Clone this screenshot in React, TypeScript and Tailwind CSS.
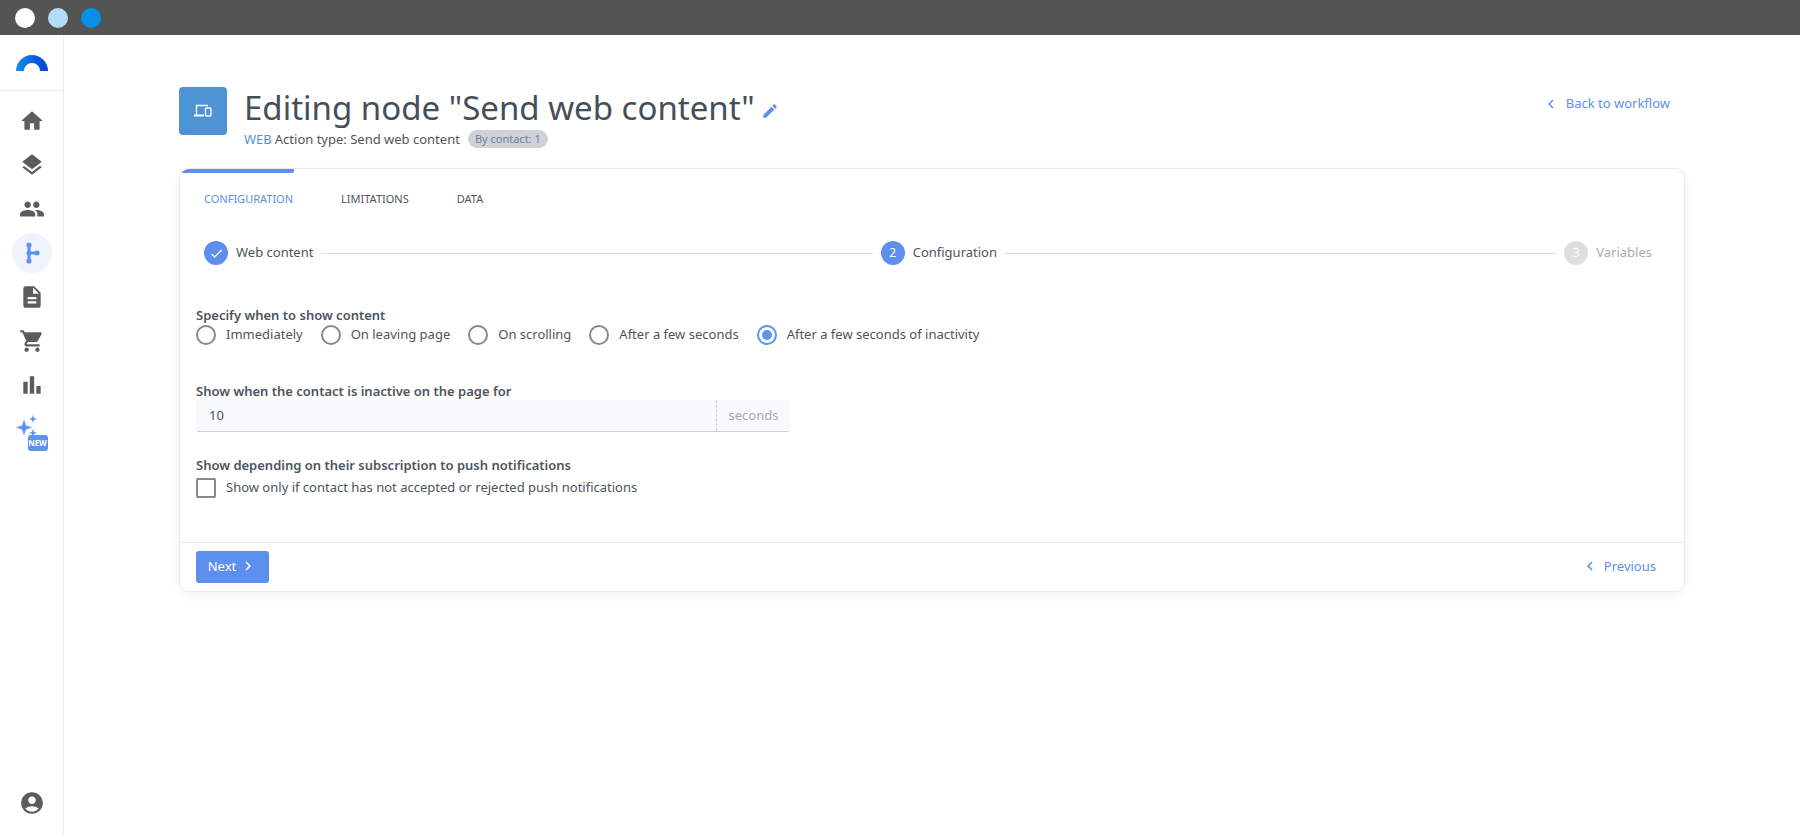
import { MdHome, MdLayers, MdPeople, MdDescription, MdShoppingCart, MdBarChart, MdAccountCircle, MdEdit, MdCheck, MdChevronLeft, MdChevronRight } from "react-icons/md";

const navIcons = [MdHome, MdLayers, MdPeople];
const navIconsBelow = [MdDescription, MdShoppingCart, MdBarChart];
const radios = [
  { label: "Immediately", gap: "mr-[18px]" },
  { label: "On leaving page", gap: "mr-[18px]" },
  { label: "On scrolling", gap: "mr-[18px]" },
  { label: "After a few seconds", gap: "mr-[18px]" },
  { label: "After a few seconds of inactivity", gap: "", checked: true },
];

function Logo() {
  return (
    <svg width="32" height="16" viewBox="0 0 32 16">
      <defs>
        <linearGradient id="logoGradient" x1="0" x2="1" y1="0" y2="0">
          <stop offset="0" stopColor="#1a8be8" />
          <stop offset="1" stopColor="#0043d4" />
        </linearGradient>
      </defs>
      <path d="M0 16A16 16 0 0 1 32 16H24A8 8 0 0 0 8 16Z" fill="url(#logoGradient)" />
    </svg>
  );
}

function BranchIcon() {
  return (
    <svg width="16" height="22" viewBox="0 0 16 22" fill="#5c92f0">
      <rect x="3.5" y="2" width="3" height="18" />
      <rect x="5" y="9.5" width="8" height="3" />
      <circle cx="5" cy="3" r="2.6" />
      <circle cx="5" cy="11" r="2.6" />
      <circle cx="5" cy="19" r="2.6" />
      <circle cx="13" cy="11" r="2.6" />
    </svg>
  );
}

function SparkleIcon() {
  return (
    <div className="relative h-[38px] w-[32px]">
      <svg width="24" height="24" viewBox="0 0 24 24" fill="#5c92f0" className="absolute left-[-1px] top-0">
        <path d="M9 4.5 11 10.5 17 12.5 11 14.5 9 20.5 7 14.5 1 12.5 7 10.5Z" />
        <path d="M18 0 19 3 22 4 19 5 18 8 17 5 14 4 17 3Z" />
        <path d="M18 14 19 17 22 18 19 19 18 22 17 19 14 18 17 17Z" />
      </svg>
      <span className="absolute left-[12px] top-[20px] flex h-[16px] w-[20px] items-center justify-center rounded-[3px] bg-[#5c92f0] text-[8px] font-bold leading-none text-white">
        NEW
      </span>
    </div>
  );
}

function Radio({ label, checked, gap }: { label: string; checked?: boolean; gap: string }) {
  return (
    <div className={`flex items-center ${gap}`}>
      <span className={`flex h-[20px] w-[20px] items-center justify-center rounded-full border-2 ${checked ? "border-[#5c92f0]" : "border-[#85888c]"}`}>
        {checked && <span className="h-[10px] w-[10px] rounded-full bg-[#5c92f0]" />}
      </span>
      <span className="ml-[10px] text-[13px] text-[#4d555e]">{label}</span>
    </div>
  );
}

function Step({ mark, label, state }: { mark: React.ReactNode; label: string; state: "done" | "active" | "todo" }) {
  return (
    <div className="flex shrink-0 items-center">
      <span className={`flex h-[24px] w-[24px] items-center justify-center rounded-full text-[12px] text-white ${state === "todo" ? "bg-[#dedede]" : "bg-[#5c8fee]"}`}>
        {mark}
      </span>
      <span className={`ml-[8px] text-[13px] ${state === "todo" ? "text-[#a6abb0]" : "text-[#4d555e]"}`}>{label}</span>
    </div>
  );
}

export default function App() {
  return (
    <div className="flex h-[835px] flex-col overflow-hidden bg-white font-['Noto_Sans',sans-serif]">
      {/* window bar */}
      <div className="flex h-[35px] shrink-0 items-center gap-[13px] bg-[#545454] pl-[15px]">
        <span className="h-[20px] w-[20px] rounded-full bg-white" />
        <span className="h-[20px] w-[20px] rounded-full bg-[#b3dcf7]" />
        <span className="h-[20px] w-[20px] rounded-full bg-[#0690e6]" />
      </div>

      <div className="flex min-h-0 flex-1">
        {/* sidebar */}
        <aside className="flex w-[64px] shrink-0 flex-col items-center border-r border-[#ececec]">
          <div className="flex h-[56px] w-full shrink-0 items-start justify-center border-b border-[#ececec] pt-[20px]">
            <Logo />
          </div>
          <div className="mt-[8px] flex flex-col items-center">
            {navIcons.map((Icon, i) => (
              <div key={i} className="flex h-[44px] w-[40px] items-center justify-center text-[#5c5c5c]">
                <Icon size={26} />
              </div>
            ))}
            <div className="my-[2px] flex h-[40px] w-[40px] items-center justify-center rounded-full bg-[#eef3fc]">
              <BranchIcon />
            </div>
            {navIconsBelow.map((Icon, i) => (
              <div key={i} className="flex h-[44px] w-[40px] items-center justify-center text-[#5c5c5c]">
                <Icon size={26} />
              </div>
            ))}
            <div className="mt-[8px]">
              <SparkleIcon />
            </div>
          </div>
          <div className="mb-[19px] mt-auto text-[#5c5c5c]">
            <MdAccountCircle size={26} />
          </div>
        </aside>

        {/* main */}
        <main className="min-w-0 flex-1 px-[115px] pt-[52px]">
          <div className="flex items-start justify-between">
            <div className="flex">
              <div className="flex h-[48px] w-[48px] items-center justify-center rounded-[4px] bg-[#4e94d4]">
                <svg width="18" height="14" viewBox="0 0 18 14" fill="none" stroke="white" strokeWidth="1.4">
                  <path d="M2.5 10.5V1.5H14" />
                  <path d="M0 11.5H10" strokeWidth="2" />
                  <rect x="11.5" y="4" width="5.5" height="8" rx="1" />
                </svg>
              </div>
              <div className="ml-[17px]">
                <div className="flex items-center">
                  <h1 className="text-[33px] font-normal leading-[42px] text-[#444f5a]">Editing node "Send web content"</h1>
                  <MdEdit size={18} className="ml-[6px] mt-[6px] text-[#5c8fee]" />
                </div>
                <div className="flex items-center text-[13px] leading-[20px] text-[#4d555e]">
                  <span className="text-[#4e94d4]">WEB</span>
                  <span className="ml-[3px]">Action type: Send web content</span>
                  <span className="ml-[8px] rounded-full bg-[#ced2d8] px-[7px] text-[11px] leading-[18px] text-[#6f7f95]">By contact: 1</span>
                </div>
              </div>
            </div>
            <div className="mr-[15px] mt-[7px] flex items-center text-[13px] text-[#5c8fee]">
              <MdChevronLeft size={18} className="mr-[6px]" />
              Back to workflow
            </div>
          </div>

          {/* card */}
          <section className="mt-[19px] h-[424px] overflow-hidden rounded-[10px] border border-[#ebebeb] shadow-[0_4px_12px_rgba(0,0,0,0.05)]">
            <div className="flex h-[434px] flex-col">
              <div className="relative flex h-[38px] items-end pl-[24px]">
                <span className="absolute left-0 top-0 h-[4px] w-[114px] rounded-b-[2px] bg-[#5c8fee]" />
                <span className="mr-[48px] text-[11px] leading-[16px] text-[#5c8fee]">CONFIGURATION</span>
                <span className="mr-[48px] text-[11px] leading-[16px] text-[#4d555e]">LIMITATIONS</span>
                <span className="text-[11px] leading-[16px] text-[#4d555e]">DATA</span>
              </div>

              <div className="mt-[34px] flex items-center pl-[24px] pr-[32px]">
                <Step mark={<MdCheck size={15} />} label="Web content" state="done" />
                <span className="mx-[8px] h-px flex-1 bg-[#dcdcdc]" />
                <Step mark="2" label="Configuration" state="active" />
                <span className="mx-[8px] h-px flex-1 bg-[#dcdcdc]" />
                <Step mark="3" label="Variables" state="todo" />
              </div>

              <div className="px-[16px] pt-[41px]">
                <div className="text-[13px] font-semibold leading-[18px] text-[#4d555e]">Specify when to show content</div>
                <div className="mt-[1px] flex items-center">
                  {radios.map((r) => (
                    <Radio key={r.label} {...r} />
                  ))}
                </div>

                <div className="mt-[37px] text-[13px] font-semibold leading-[18px] text-[#4d555e]">Show when the contact is inactive on the page for</div>
                <div className="flex h-[32px] w-[594px] rounded-[3px] border-b border-[#ccd1d8] bg-[#f8f9fa] text-[13px]">
                  <div className="flex flex-1 items-center pl-[13px] text-[#4d555e]">10</div>
                  <div className="flex w-[74px] items-center justify-center border-l border-dashed border-[#ccd1d8] text-[#a6abb0]">seconds</div>
                </div>

                <div className="mt-[24px] text-[13px] font-semibold leading-[18px] text-[#4d555e]">Show depending on their subscription to push notifications</div>
                <div className="mt-[4px] flex items-center">
                  <span className="h-[20px] w-[20px] rounded-[2px] border-2 border-[#85888c]" />
                  <span className="ml-[10px] text-[13px] text-[#4d555e]">Show only if contact has not accepted or rejected push notifications</span>
                </div>
              </div>

              <div className="mt-[44px] flex h-[49px] items-center justify-between border-t border-[#e6e6e6] pl-[16px] pr-[28px]">
                <button className="flex h-[32px] w-[73px] items-center justify-center rounded-[3px] bg-[#5c8fee] text-[13px] text-white">
                  Next
                  <MdChevronRight size={18} className="ml-[3px] mb-[2px]" />
                </button>
                <div className="flex items-center text-[13px] text-[#5c8fee]">
                  <MdChevronLeft size={18} className="mr-[5px] mb-[2px]" />
                  Previous
                </div>
              </div>
            </div>
          </section>
        </main>
      </div>
    </div>
  );
}
